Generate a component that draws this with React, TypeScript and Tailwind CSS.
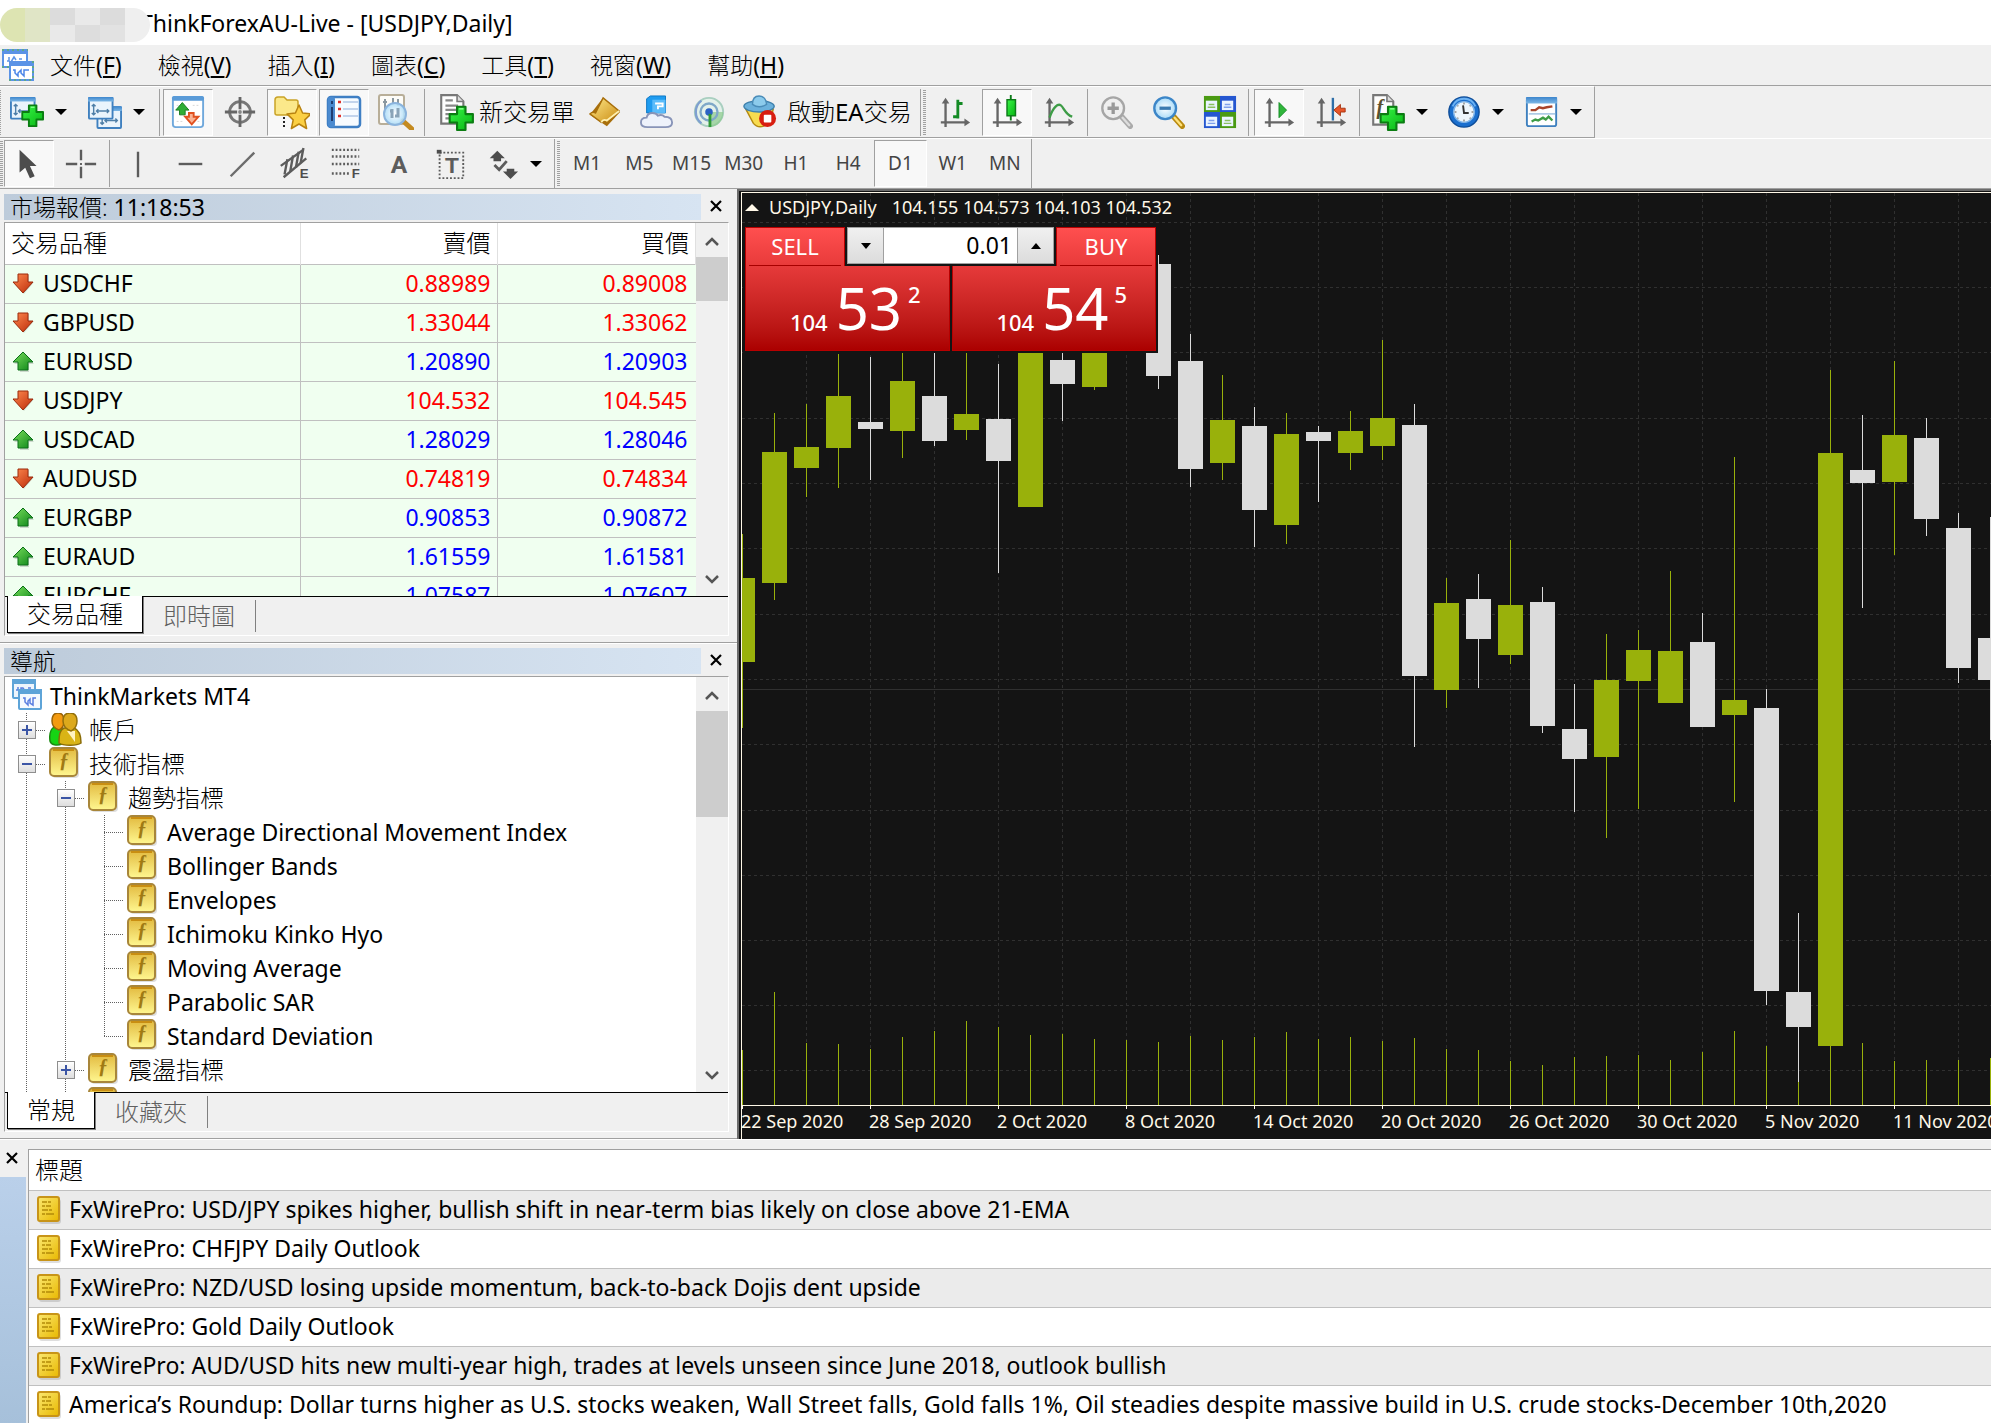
import React from 'react';

/* ---------- data ---------- */

type Quote = { symbol: string; up: boolean; bid: string; ask: string };

const quotes: Quote[] = [
  { symbol: 'USDCHF', up: false, bid: '0.88989', ask: '0.89008' },
  { symbol: 'GBPUSD', up: false, bid: '1.33044', ask: '1.33062' },
  { symbol: 'EURUSD', up: true, bid: '1.20890', ask: '1.20903' },
  { symbol: 'USDJPY', up: false, bid: '104.532', ask: '104.545' },
  { symbol: 'USDCAD', up: true, bid: '1.28029', ask: '1.28046' },
  { symbol: 'AUDUSD', up: false, bid: '0.74819', ask: '0.74834' },
  { symbol: 'EURGBP', up: true, bid: '0.90853', ask: '0.90872' },
  { symbol: 'EURAUD', up: true, bid: '1.61559', ask: '1.61581' },
  { symbol: 'EURCHF', up: true, bid: '1.07587', ask: '1.07607' },
];

const news = [
  'FxWirePro: USD/JPY spikes higher, bullish shift in near-term bias likely on close above 21-EMA',
  'FxWirePro: CHFJPY Daily Outlook',
  'FxWirePro: NZD/USD losing upside momentum, back-to-back Dojis dent upside',
  'FxWirePro: Gold Daily Outlook',
  'FxWirePro: AUD/USD hits new multi-year high, trades at levels unseen since June 2018, outlook bullish',
  'America’s Roundup: Dollar turns higher as U.S. stocks weaken, Wall Street falls, Gold falls 1%, Oil steadies despite massive build in U.S. crude stocks-December 10th,2020',
];

const menus = [
  ['文件', 'F'],
  ['檢視', 'V'],
  ['插入', 'I'],
  ['圖表', 'C'],
  ['工具', 'T'],
  ['視窗', 'W'],
  ['幫助', 'H'],
];

const periods = ['M1', 'M5', 'M15', 'M30', 'H1', 'H4', 'D1', 'W1', 'MN'];

// high, body top, body bottom, low, rising, volume top
type Candle = [number, number, number, number, boolean, number];

const candles: Candle[] = [
  [534, 578, 662, 728, true, 1050],
  [413, 452, 583, 600, true, 992],
  [404, 447, 468, 497, true, 1043],
  [354, 396, 448, 488, true, 1044],
  [357, 422, 429, 480, false, 1049],
  [340, 381, 431, 458, true, 1037],
  [340, 396, 441, 446, false, 1031],
  [340, 414, 430, 440, true, 1021],
  [364, 419, 461, 573, false, 1027],
  [330, 340, 507, 507, true, 1035],
  [340, 360, 384, 421, false, 1034],
  [330, 340, 387, 390, true, 1039],
  [300, 310, 330, 340, true, 1040],
  [255, 264, 376, 389, false, 1042],
  [334, 361, 469, 487, false, 1036],
  [375, 420, 463, 480, true, 1040],
  [407, 426, 510, 547, false, 1037],
  [413, 434, 525, 544, true, 1032],
  [426, 432, 441, 502, false, 1039],
  [411, 431, 453, 470, true, 1037],
  [340, 418, 446, 460, true, 1041],
  [404, 425, 676, 747, false, 1038],
  [578, 603, 690, 708, true, 1049],
  [574, 599, 639, 688, false, 1050],
  [540, 605, 655, 664, true, 1061],
  [587, 602, 726, 733, false, 1065],
  [684, 729, 759, 812, false, 1057],
  [634, 680, 757, 838, true, 1056],
  [630, 650, 681, 809, true, 1055],
  [571, 651, 703, 703, true, 1060],
  [613, 642, 727, 727, false, 1052],
  [457, 700, 715, 802, true, 1031],
  [689, 708, 991, 1005, false, 1046],
  [913, 992, 1027, 1082, false, 1070],
  [370, 453, 1046, 1046, true, 1046],
  [415, 470, 483, 608, false, 1043],
  [361, 435, 482, 555, true, 1061],
  [418, 438, 519, 536, false, 1060],
  [513, 528, 668, 683, false, 1060],
  [517, 638, 680, 740, false, 1058],
];

const gridRows = [222, 287, 352, 418, 483, 548, 614, 679, 744, 810, 875, 940, 1005, 1070];
const dates = [
  '22 Sep 2020',
  '28 Sep 2020',
  '2 Oct 2020',
  '8 Oct 2020',
  '14 Oct 2020',
  '20 Oct 2020',
  '26 Oct 2020',
  '30 Oct 2020',
  '5 Nov 2020',
  '11 Nov 2020',
];

type Guide = 'line' | 'tee' | 'end' | 'plus' | 'minus';
type Node = { guides: Guide[]; icon: 'root' | 'people' | 'fx'; label: string };

const tree: Node[] = [
  { guides: [], icon: 'root', label: 'ThinkMarkets MT4' },
  { guides: ['plus'], icon: 'people', label: '帳戶' },
  { guides: ['minus'], icon: 'fx', label: '技術指標' },
  { guides: ['line', 'minus'], icon: 'fx', label: '趨勢指標' },
  { guides: ['line', 'line', 'tee'], icon: 'fx', label: 'Average Directional Movement Index' },
  { guides: ['line', 'line', 'tee'], icon: 'fx', label: 'Bollinger Bands' },
  { guides: ['line', 'line', 'tee'], icon: 'fx', label: 'Envelopes' },
  { guides: ['line', 'line', 'tee'], icon: 'fx', label: 'Ichimoku Kinko Hyo' },
  { guides: ['line', 'line', 'tee'], icon: 'fx', label: 'Moving Average' },
  { guides: ['line', 'line', 'tee'], icon: 'fx', label: 'Parabolic SAR' },
  { guides: ['line', 'line', 'end'], icon: 'fx', label: 'Standard Deviation' },
  { guides: ['line', 'plus'], icon: 'fx', label: '震盪指標' },
  { guides: ['line', 'tee'], icon: 'fx', label: '' },
];

/* ---------- icons ---------- */

function Svg({ children, size = 'size-[34px]' }: { children: React.ReactNode; size?: string }) {
  return (
    <svg viewBox="0 0 36 36" className={`${size} shrink-0`} fill="none" aria-hidden="true">
      {children}
    </svg>
  );
}

const PLUS = 'M-4 -11H4V-4H11V4H4V11H-4V4H-11V-4H-4Z';

function Plus({ x, y }: { x: number; y: number }) {
  return (
    <g transform={`translate(${x} ${y})`}>
      <path d={PLUS} fill="url(#gPlus)" stroke="#0b7d12" strokeWidth="2" strokeLinejoin="round" />
      <path d="M-2 -9H2" stroke="#7dff85" strokeWidth="1.5" />
    </g>
  );
}

function Defs() {
  return (
    <svg className="absolute size-0" aria-hidden="true">
      <defs>
        <linearGradient id="gPlus" x1="0" y1="0" x2="1" y2="1">
          <stop offset="0" stopColor="#39f548" />
          <stop offset="1" stopColor="#07b512" />
        </linearGradient>
        <linearGradient id="gFx" x1="0" y1="0" x2="0" y2="1">
          <stop offset="0" stopColor="#e2b93e" />
          <stop offset="0.5" stopColor="#f0d868" />
          <stop offset="1" stopColor="#fff790" />
        </linearGradient>
        <linearGradient id="gNews" x1="0" y1="0" x2="1" y2="1">
          <stop offset="0" stopColor="#fbe870" />
          <stop offset="1" stopColor="#e8b800" />
        </linearGradient>
        <linearGradient id="gGreen" x1="0" y1="0" x2="1" y2="1">
          <stop offset="0" stopColor="#7be05d" />
          <stop offset="1" stopColor="#0b8418" />
        </linearGradient>
        <linearGradient id="gRed" x1="0" y1="0" x2="1" y2="1">
          <stop offset="0" stopColor="#ff8a50" />
          <stop offset="1" stopColor="#bb2a08" />
        </linearGradient>
        <linearGradient id="gBlue" x1="0" y1="0" x2="0" y2="1">
          <stop offset="0" stopColor="#3b84cc" />
          <stop offset="1" stopColor="#7db8e6" />
        </linearGradient>
        <linearGradient id="gGold" x1="0" y1="0" x2="1" y2="1">
          <stop offset="0" stopColor="#ffe98a" />
          <stop offset="1" stopColor="#c98a10" />
        </linearGradient>
        <radialGradient id="gLens">
          <stop offset="0" stopColor="#ffffff" />
          <stop offset="1" stopColor="#a9dbf8" />
        </radialGradient>
      </defs>
    </svg>
  );
}

function AppLogo() {
  return (
    <svg viewBox="0 0 32 32" className="size-8 shrink-0" aria-hidden="true">
      <rect x="1" y="2" width="24" height="16" fill="#fff" stroke="#5b93e6" strokeWidth="2" />
      <rect x="0" y="0" width="26" height="5" fill="#5b93e6" />
      <path d="M5 12h2V8M9 13l3-5 2 3M17 10h3" stroke="#5b93e6" strokeWidth="1.5" fill="none" />
      <rect x="8" y="13" width="23" height="18" fill="#fff" stroke="#5b93e6" strokeWidth="2" />
      <rect x="7" y="12" width="25" height="5" fill="#5b93e6" />
      <path d="M11 21h2v3l3 3v-3l3-3v3l3 3v-6h5" stroke="#4c86e8" strokeWidth="1.5" fill="none" />
      <path d="M0 1h26M0 18h7M7 31h25M31 12v19" stroke="#5fb06c" strokeWidth="1.5" strokeDasharray="2 3" />
    </svg>
  );
}

function RootIcon() {
  return (
    <svg viewBox="0 0 30 32" className="h-8 w-[30px] shrink-0" fill="none" aria-hidden="true">
      <rect x="1" y="1" width="22" height="18" rx="1" fill="#eef5fc" stroke="#5ea4d8" strokeWidth="2" />
      <rect x="0" y="0" width="24" height="5" fill="#5ea4d8" />
      <path d="M4 11h2V8M9 13V9h2l2 3M16 9h3" stroke="#5b7fe0" strokeWidth="1.5" />
      <rect x="7" y="11" width="22" height="19" rx="1" fill="#f6fafe" stroke="#5ea4d8" strokeWidth="2" />
      <rect x="6" y="10" width="24" height="5" fill="#5ea4d8" />
      <path d="M11 19h2v4l3 3v-4l2-2v4l3 2v-7h3" stroke="#5b7fe0" strokeWidth="1.5" />
    </svg>
  );
}

function FxIcon() {
  return (
    <svg viewBox="0 0 30 31" className="h-[31px] w-[30px] shrink-0" aria-hidden="true">
      <rect x="3" y="3" width="27" height="28" rx="4" fill="#000" opacity="0.13" />
      <rect x="1" y="1" width="27" height="28" rx="4" fill="url(#gFx)" stroke="#a8863a" strokeWidth="2" />
      <path d="M4 3h21" stroke="#c98e12" strokeWidth="2" />
      <text x="10" y="20" fontFamily="Liberation Serif, serif" fontStyle="italic" fontWeight="700" fontSize="20" fill="#a07a14">
        ƒ
      </text>
    </svg>
  );
}

function PeopleIcon() {
  return (
    <svg viewBox="0 0 34 34" className="h-[34px] w-[34px] shrink-0" aria-hidden="true">
      <path d="M1 28c-1-8 1-12 4-14h8v17c-5 2-11 1-12-3z" fill="#16d414" stroke="#1a8a10" strokeWidth="1.5" />
      <path d="M3 8q0-8 6-8t6 8q0 7-5 9-7-2-7-9z" fill="#f39a10" stroke="#9a6408" strokeWidth="1.5" />
      <path d="M10 30c0-9 1-13 5-15h10c5 2 7 7 7 15-4 3-18 3-22 0z" fill="#d9b416" stroke="#8a6c08" strokeWidth="1.5" />
      <path d="M18 18l8 11V18z" fill="#fff3c0" />
      <path d="M14 8q0-8 7-8t7 8q0 7-6 10-8-3-8-10z" fill="#dca91c" stroke="#93700c" strokeWidth="1.5" />
    </svg>
  );
}

function TrendIcon({ up }: { up: boolean }) {
  return (
    <svg viewBox="0 0 22 22" className="size-[22px] shrink-0" aria-hidden="true">
      {up ? (
        <g>
          <path d="M12 2l10 11h-5v8h-9v-8H2z" fill="#000" opacity="0.15" />
          <path d="M11 1l10 10h-5v8H6v-8H1z" fill="url(#gGreen)" stroke="#0a6e18" strokeWidth="1" strokeLinejoin="round" />
        </g>
      ) : (
        <g>
          <path d="M8 2h9v7h5l-10 12L2 10h6z" fill="#000" opacity="0.15" />
          <path d="M6 1h10v8h5L11 20 1 9h5z" fill="url(#gRed)" stroke="#9c2a0c" strokeWidth="1" strokeLinejoin="round" />
        </g>
      )}
    </svg>
  );
}

function NewsIcon() {
  return (
    <svg viewBox="0 0 24 28" className="h-7 w-6 shrink-0" aria-hidden="true">
      <rect x="2" y="3" width="22" height="25" rx="3" fill="#000" opacity="0.13" />
      <rect x="1" y="1" width="21" height="24" rx="2" fill="url(#gNews)" stroke="#c89418" strokeWidth="2" />
      <path d="M5 6h5M11 6h3M5 10h3M9 10h5M5 14h6M12 14h3M5 18h3M9 18h8" stroke="#b38a08" strokeWidth="1.6" />
    </svg>
  );
}

function ChartWindow({ x, y }: { x: number; y: number }) {
  return (
    <g transform={`translate(${x} ${y})`}>
      <rect x="1" y="1" width="25" height="22" rx="1" fill="#eaf4fc" stroke="#3f80bf" strokeWidth="2" />
      <rect x="0" y="0" width="27" height="5" rx="1" fill="url(#gBlue)" />
      <path d="M6 8v11M4 10l2-2 2 2M4 17l2 2 2-2M9 15h13M20 13l2 2-2 2M11 13l-2 2 2 2" stroke="#4f7fa8" strokeWidth="1.5" />
    </g>
  );
}

const NewChartIcon = () => (
  <Svg>
    <ChartWindow x={0} y={2} />
    <Plus x={24} y={22} />
  </Svg>
);

const ProfilesIcon = () => (
  <Svg>
    <ChartWindow x={9} y={12} />
    <ChartWindow x={0} y={2} />
  </Svg>
);

const MarketIcon = () => (
  <Svg>
    <rect x="2" y="2" width="32" height="32" rx="3" fill="#fff" stroke="#6fa8dc" strokeWidth="2" />
    <rect x="1" y="1" width="34" height="5" rx="2" fill="#5a9bd8" />
    <path d="M6 11h6M23 11h8M6 28h8M28 28h3" stroke="#d5d5d5" strokeWidth="1" strokeDasharray="2 2" />
    <path d="M12 8l7 8h-4v5H9v-5H5z" fill="#2fae35" stroke="#1a7c20" />
    <path d="M19 19h5v4h5l-7 8-7-8h4z" fill="#f9b294" stroke="#e0501f" strokeWidth="2" />
  </Svg>
);

const TargetIcon = () => (
  <Svg>
    <circle cx="18" cy="18" r="11" stroke="#777" strokeWidth="3" />
    <path d="M18 2v13M18 21v13M2 18h13M21 18h13" stroke="#666" strokeWidth="3" />
    <circle cx="18" cy="18" r="2" fill="#888" />
  </Svg>
);

const NavigatorIcon = () => (
  <Svg size="size-9">
    <path d="M1 6q0-3 3-3h6l3 3h9q2 0 2 2v11q0 2-2 2H3q-2 0-2-2z" fill="#fbe88a" stroke="#c9a227" strokeWidth="1.5" />
    <path d="M10 23v12" stroke="#222" strokeWidth="2" strokeDasharray="2 2" />
    <path
      d="M25 11l3.600 8 8.400.900-6.200 6 1.800 8.600L25 30l-7.600 4.500 1.800-8.600-6.200-6 8.400-.900z"
      fill="#fbd044"
      stroke="#b98310"
      strokeWidth="1.5"
      strokeLinejoin="round"
    />
  </Svg>
);

const TerminalIcon = () => (
  <Svg size="size-9">
    <rect x="2" y="3" width="32" height="30" rx="3" fill="#f7fbff" stroke="#3f7fc4" strokeWidth="2.500" />
    <rect x="2" y="3" width="7" height="30" rx="2" fill="#4b8bd0" />
    <path d="M6 7v3M6 13v14" stroke="#1f3d70" strokeWidth="2" />
    <path d="M17 8h15M17 15h15M17 22h15" stroke="#b3c7e6" strokeWidth="1.500" />
    <path d="M12 8h3M12 15h3M12 22h3" stroke="#e0322a" strokeWidth="2.500" />
  </Svg>
);

const TesterIcon = () => (
  <Svg size="size-9">
    <rect x="1" y="1" width="25" height="29" rx="2" fill="#fdfcf8" stroke="#b8ae98" strokeWidth="2" />
    <path d="M7 5v10M5 8h4M20 5v7M15 4v6" stroke="#8b98a0" strokeWidth="2" />
    <path d="M25 27l9 8" stroke="#c48a20" strokeWidth="5" strokeLinecap="round" />
    <circle cx="17" cy="20" r="11" fill="url(#gLens)" fillOpacity="0.900" stroke="#8bb4dd" strokeWidth="2" />
    <path d="M14 15v9M12 17h3M20 14v8h-3" stroke="#8aa4b8" strokeWidth="3" />
  </Svg>
);

const NewOrderIcon = () => (
  <Svg size="size-[38px]">
    <path d="M4 2h15l6 6v21H4z" fill="#fdfdfd" stroke="#777" strokeWidth="2" />
    <path d="M19 2v6h6" fill="#ddd" stroke="#777" strokeWidth="1.500" />
    <path d="M8 7h7M8 12h12M8 16h14M8 20h12M8 24h7" stroke="#888" strokeWidth="2" />
    <Plus x={23} y={24} />
  </Svg>
);

const BookIcon = () => (
  <Svg>
    <path d="M2 21L16 3l18 15-14 15z" fill="#a86f0c" />
    <path d="M2 20Q5 17 8 19L16 3l17 14-13 13Q17 26 14 29z" fill="url(#gGold)" stroke="#a86f0c" strokeWidth="1.500" />
    <path d="M14 29q2-4 6-2l13-10" stroke="#fff0b0" strokeWidth="2" />
  </Svg>
);

const CloudServerIcon = () => (
  <Svg>
    <path d="M7 4l4-3h16v18H7z" fill="#1f9cf0" stroke="#0c76c4" />
    <path d="M13 5h14v14H13z" fill="#5bbcfa" />
    <path d="M16 9h8v3h-5v3" stroke="#fff" strokeWidth="2" />
    <path
      d="M8 34q-7 0-7-5 0-5 6-5 1-5 6-5 4 0 6 3 4-2 7 1 8 0 8 6 0 5-7 5z"
      fill="#eef2fb"
      stroke="#8894b8"
      strokeWidth="2"
    />
  </Svg>
);

const SignalIcon = () => (
  <Svg>
    <circle cx="18" cy="18" r="15" fill="#e4f1ea" stroke="#a9cfc0" strokeWidth="2" />
    <path d="M18 18h15a15 15 0 0 1-15 16z" fill="#8cca8c" opacity="0.700" />
    <path d="M10 30a15 15 0 0 1 0-24" stroke="#7f9fd0" strokeWidth="2.500" />
    <circle cx="18" cy="18" r="9" stroke="#7fa8c8" strokeWidth="2.500" />
    <circle cx="18" cy="18" r="4" fill="#2b62c4" />
    <path d="M19 20v14" stroke="#2f9a38" strokeWidth="3" />
  </Svg>
);

const ExpertIcon = () => (
  <Svg>
    <path d="M3 15h29l-2 8-8 10q-7 2-11-3z" fill="#f8dc50" stroke="#b58a10" strokeWidth="1.500" />
    <ellipse cx="17" cy="12" rx="16" ry="6" fill="#6bb1dc" stroke="#3f80ac" strokeWidth="1.500" />
    <path d="M10 10q0-9 7-9t8 9q-8 5-15 0z" fill="#8ccbec" stroke="#4a8cb8" strokeWidth="1.500" />
    <circle cx="26" cy="25" r="9" fill="#d81e10" />
    <rect x="22" y="21" width="8" height="8" rx="1" fill="#fff" />
  </Svg>
);

const Axes = () => (
  <g>
    <path d="M8 7v27M3 29h27" stroke="#666" strokeWidth="2.500" />
    <path d="M8 3l4 6H4zM34 29l-6 4v-8z" fill="#666" />
  </g>
);

const BarsIcon = () => (
  <Svg>
    <Axes />
    <path d="M21 5v20M21 9h5M16 23h5" stroke="#138a24" strokeWidth="3" />
  </Svg>
);

const CandlesIcon = () => (
  <Svg>
    <Axes />
    <path d="M22 0v27" stroke="#0c7a18" strokeWidth="2" />
    <rect x="18" y="5" width="9" height="17" fill="url(#gPlus)" stroke="#0c7a18" strokeWidth="1.500" />
  </Svg>
);

const LineIcon = () => (
  <Svg>
    <Axes />
    <path d="M8 24C12 12 17 9 20 11s5 10 12 12" stroke="#3d9c46" strokeWidth="2.500" />
  </Svg>
);

const ZoomInIcon = () => (
  <Svg>
    <path d="M24 23l9 10" stroke="#aaa" strokeWidth="6" strokeLinecap="round" />
    <path d="M25 24l7 8" stroke="#ddd" strokeWidth="2.500" strokeLinecap="round" />
    <circle cx="15" cy="14" r="11.500" fill="#efefef" stroke="#a6a6a6" strokeWidth="2.500" />
    <path d="M15 8v12M9 14h12" stroke="#999" strokeWidth="3.500" />
  </Svg>
);

const ZoomOutIcon = () => (
  <Svg>
    <path d="M24 23l9 10" stroke="#b98a10" strokeWidth="6" strokeLinecap="round" />
    <path d="M25 24l7 8" stroke="#ffe27a" strokeWidth="2.500" strokeLinecap="round" />
    <circle cx="15" cy="14" r="11.500" fill="url(#gLens)" stroke="#3c86c8" strokeWidth="2.500" />
    <path d="M9 14h12" stroke="#3a7ab0" strokeWidth="3.500" />
  </Svg>
);

const Tile = ({ x, y, green }: { x: number; y: number; green: boolean }) => (
  <g transform={`translate(${x} ${y})`}>
    <rect width="17" height="17" fill={green ? '#4a9a12' : '#2456d0'} />
    <rect x="2" y="5" width="12" height="10" fill="#eaf4ff" />
    <path d="M5 9h6M4 12h8" stroke={green ? '#8cc060' : '#7fa0ec'} strokeWidth="1.500" />
  </g>
);

const TileIcon = () => (
  <Svg>
    <Tile x={1} y={1} green />
    <Tile x={18} y={1} green={false} />
    <Tile x={1} y={18} green={false} />
    <Tile x={18} y={18} green />
  </Svg>
);

const AutoScrollIcon = () => (
  <Svg>
    <Axes />
    <path d="M18 8l8 8-8 8z" fill="#2fb53a" stroke="#138a24" />
  </Svg>
);

const ShiftIcon = () => (
  <Svg>
    <Axes />
    <path d="M20 3v24" stroke="#2f6fa8" strokeWidth="2.500" />
    <path d="M21 16l7-6v4h5v4h-5v4z" fill="#e8562a" stroke="#a83410" />
  </Svg>
);

const IndicatorsIcon = () => (
  <Svg size="size-[38px]">
    <path d="M4 2h13l6 6v22H4z" fill="#fdfdfd" stroke="#777" strokeWidth="2" />
    <path d="M17 2v6h6" fill="#ddd" stroke="#777" strokeWidth="1.500" />
    <text x="7" y="20" fontFamily="Liberation Serif, serif" fontStyle="italic" fontWeight="700" fontSize="19" fill="#5c5030">
      f
    </text>
    <Plus x={22} y={24} />
  </Svg>
);

const ClockIcon = () => (
  <Svg>
    <circle cx="18" cy="18" r="16" fill="#1b6fce" stroke="#0e4d99" strokeWidth="1.500" />
    <path d="M6 12a13 13 0 0 1 24 0" stroke="#6db2f2" strokeWidth="2" />
    <circle cx="18" cy="18" r="11" fill="#eef6fc" stroke="#7fb4e8" strokeWidth="1.500" />
    <path d="M17 11l1 8h5" stroke="#333" strokeWidth="2" />
    <path d="M18 8v2M18 26v2M8 18h2M26 18h2M11 11l1 1M25 11l-1 1M11 25l1-1M25 25l-1-1" stroke="#888" strokeWidth="1.500" />
  </Svg>
);

const TemplateIcon = () => (
  <Svg>
    <rect x="2" y="3" width="31" height="30" rx="2" fill="#fff" stroke="#3f80bf" strokeWidth="2" />
    <rect x="1" y="2" width="33" height="7" rx="1" fill="url(#gBlue)" />
    <path d="M6 16h5l4-3 4 1 4-1 6-1" stroke="#a8442a" strokeWidth="2.500" />
    <path d="M4 20h28" stroke="#9cc0e0" strokeWidth="1.500" />
    <path d="M7 28l4-2 3 1 5-3 3 2 3-3 4 4" stroke="#3d9c46" strokeWidth="2.500" />
  </Svg>
);

const CursorIcon = () => (
  <Svg>
    <path d="M8 3v24l6-5 5 11 5-2-5-11h7z" fill="#4d4d4d" />
  </Svg>
);

const CrossIcon = () => (
  <Svg>
    <path d="M18 3v11M18 21v12M2 18h12M22 18h12" stroke="#5c5c5c" strokeWidth="2.500" />
    <path d="M17 18h2" stroke="#5c5c5c" strokeWidth="2" />
  </Svg>
);

const VLineIcon = () => (
  <Svg>
    <path d="M18 5v27" stroke="#5c5c5c" strokeWidth="2.500" />
  </Svg>
);

const HLineIcon = () => (
  <Svg>
    <path d="M6 18h25" stroke="#5c5c5c" strokeWidth="2.500" />
  </Svg>
);

const TrendLineIcon = () => (
  <Svg>
    <path d="M6 31L31 6" stroke="#6c6c6c" strokeWidth="2.500" />
  </Svg>
);

const ChannelIcon = () => (
  <Svg>
    <path d="M4 20L28 3M7 32L31 12" stroke="#5c5c5c" strokeWidth="2.500" />
    <path d="M11 13L8 29M17 9l-3 17M23 5l-3 17M28 1l-3 16" stroke="#5c5c5c" strokeWidth="2.500" />
    <text x="24" y="33" fontFamily="Liberation Sans, sans-serif" fontWeight="700" fontSize="14" fill="#4d4d4d">
      E
    </text>
  </Svg>
);

const FiboIcon = () => (
  <Svg>
    <path d="M3 3h29M3 10h29M3 18h29M3 28h19" stroke="#5c5c5c" strokeWidth="2.500" strokeDasharray="2 2" />
    <text x="24" y="33" fontFamily="Liberation Sans, sans-serif" fontWeight="700" fontSize="14" fill="#4d4d4d">
      F
    </text>
  </Svg>
);

const TextIcon = () => (
  <Svg>
    <text x="19" y="28" textAnchor="middle" fontFamily="Roboto, sans-serif" fontWeight="700" fontSize="26" fill="#5c5c5c">
      A
    </text>
  </Svg>
);

const LabelIcon = () => (
  <Svg>
    <rect x="7" y="6" width="25" height="27" stroke="#5c5c5c" strokeWidth="2" strokeDasharray="2 2" />
    <rect x="4" y="3" width="5" height="4" fill="#4d4d4d" />
    <text x="20" y="28" textAnchor="middle" fontFamily="Liberation Sans, sans-serif" fontWeight="700" fontSize="24" fill="#5c5c5c">
      T
    </text>
  </Svg>
);

const ArrowsIcon = () => (
  <Svg>
    <path d="M13 4l8 8h-4v3H9v-3H5zM27 34l-8-8h4v-3h8v3h4z" fill="#4d4d4d" />
    <path d="M10 19l5 5 8-9" stroke="#5c5c5c" strokeWidth="3" />
  </Svg>
);

/* ---------- toolbar parts ---------- */

function ToolButton({ label, pressed, children }: { label: string; pressed?: boolean; children: React.ReactNode }) {
  return (
    <button type="button" aria-label={label} aria-pressed={pressed} className="flex h-[49px] w-[52px] shrink-0 items-center justify-center p-px">
      <span
        className={
          pressed
            ? 'flex size-full items-center justify-center border border-t-[#a0a0a0] border-r-white border-b-white border-l-[#a0a0a0] bg-[#f8f8f8]'
            : 'flex size-full items-center justify-center'
        }
      >
        {children}
      </span>
    </button>
  );
}

function DropButton({ label }: { label: string }) {
  return (
    <button type="button" aria-label={label} className="flex h-[49px] w-4 shrink-0 items-center justify-center">
      <svg viewBox="0 0 12 6" className="h-1.5 w-3" aria-hidden="true">
        <path d="M0 0h12L6 6z" fill="#000" />
      </svg>
    </button>
  );
}

const Separator = () => <span className="mx-0.5 h-[47px] w-px shrink-0 bg-[#a0a0a0]" />;

const Grip = () => (
  <span className="h-[45px] w-[3px] shrink-0 bg-[repeating-linear-gradient(to_bottom,#a0a0a0_0,#a0a0a0_1px,#f0f0f0_1px,#f0f0f0_2px)]" />
);

function MainToolbar() {
  return (
    <div className="flex">
      <div role="toolbar" aria-label="標準" className="flex h-[52px] items-center border-t border-r border-b border-t-white border-r-[#a0a0a0] border-b-[#a0a0a0]">
        <span className="-ml-0.5 flex"><Grip /></span>
        <ToolButton label="新圖表"><NewChartIcon /></ToolButton>
        <DropButton label="新圖表選單" />
        <span className="w-2.5" />
        <ToolButton label="設定檔"><ProfilesIcon /></ToolButton>
        <DropButton label="設定檔選單" />
        <span className="w-2.5" />
        <Separator />
        <ToolButton label="市場報價" pressed><MarketIcon /></ToolButton>
        <ToolButton label="數據窗口"><TargetIcon /></ToolButton>
        <ToolButton label="導航" pressed><NavigatorIcon /></ToolButton>
        <ToolButton label="終端" pressed><TerminalIcon /></ToolButton>
        <ToolButton label="策略測試"><TesterIcon /></ToolButton>
        <Separator />
        <button type="button" className="flex h-[49px] items-center gap-1 pr-1 pl-2.5 text-[24px] font-light whitespace-nowrap">
          <NewOrderIcon />
          新交易單
        </button>
        <ToolButton label="MetaEditor"><BookIcon /></ToolButton>
        <ToolButton label="虛擬主機"><CloudServerIcon /></ToolButton>
        <ToolButton label="信號"><SignalIcon /></ToolButton>
        <button type="button" className="flex h-[49px] items-center gap-2.5 pr-1.5 pl-2 text-[24px] font-light whitespace-nowrap">
          <ExpertIcon />
          <span>
            啟動<span className="font-normal">EA</span>交易
          </span>
        </button>
        <Separator />
        <Grip />
        <span className="w-[3px]" />
        <ToolButton label="柱狀圖"><BarsIcon /></ToolButton>
        <ToolButton label="陰陽燭" pressed><CandlesIcon /></ToolButton>
        <ToolButton label="折線圖"><LineIcon /></ToolButton>
        <Separator />
        <ToolButton label="放大"><ZoomInIcon /></ToolButton>
        <ToolButton label="縮小"><ZoomOutIcon /></ToolButton>
        <ToolButton label="平鋪視窗"><TileIcon /></ToolButton>
        <Separator />
        <span className="w-0.5" />
        <ToolButton label="自動滾動" pressed><AutoScrollIcon /></ToolButton>
        <ToolButton label="圖表平移"><ShiftIcon /></ToolButton>
        <Separator />
        <ToolButton label="指標"><IndicatorsIcon /></ToolButton>
        <DropButton label="指標選單" />
        <span className="w-2" />
        <ToolButton label="週期"><ClockIcon /></ToolButton>
        <DropButton label="週期選單" />
        <span className="w-2.5" />
        <ToolButton label="模板"><TemplateIcon /></ToolButton>
        <DropButton label="模板選單" />
        <span className="w-2.5" />
      </div>
    </div>
  );
}

function LineToolbar() {
  return (
    <div className="flex border-t border-t-white">
      <div role="toolbar" aria-label="畫線" className="flex h-[49px] items-center border-r border-[#a0a0a0]">
        <Grip />
        <ToolButton label="游標" pressed><CursorIcon /></ToolButton>
        <ToolButton label="十字"><CrossIcon /></ToolButton>
        <Separator />
        <ToolButton label="垂直線"><VLineIcon /></ToolButton>
        <ToolButton label="水平線"><HLineIcon /></ToolButton>
        <ToolButton label="趨勢線"><TrendLineIcon /></ToolButton>
        <ToolButton label="等距通道"><ChannelIcon /></ToolButton>
        <ToolButton label="斐波那契"><FiboIcon /></ToolButton>
        <ToolButton label="文字"><TextIcon /></ToolButton>
        <ToolButton label="文字標籤"><LabelIcon /></ToolButton>
        <ToolButton label="箭頭"><ArrowsIcon /></ToolButton>
        <DropButton label="箭頭選單" />
        <span className="w-2.5" />
      </div>
      <div role="toolbar" aria-label="時間週期" className="flex h-[49px] items-center gap-px border-r border-[#a0a0a0] pl-0.5">
        <Grip />
        <div className="grid w-[470px] grid-cols-9">
          {periods.map((p) => (
            <button
              key={p}
              type="button"
              aria-pressed={p === 'D1'}
              className={
                p === 'D1'
                  ? 'h-[47px] border border-t-[#a0a0a0] border-r-white border-b-white border-l-[#a0a0a0] bg-[#f8f8f8] text-[19px] text-[#444]'
                  : 'h-[47px] text-[19px] text-[#444]'
              }
            >
              {p}
            </button>
          ))}
        </div>
      </div>
    </div>
  );
}

/* ---------- docked panels ---------- */

function CloseButton({ label }: { label: string }) {
  return (
    <button type="button" aria-label={label} className="flex h-6 w-full items-center justify-center">
      <svg viewBox="0 0 12 12" className="size-3" aria-hidden="true">
        <path d="M1 1l10 10M11 1L1 11" stroke="#000" strokeWidth="2.200" />
      </svg>
    </button>
  );
}

function PanelTitle({ children, close }: { children: React.ReactNode; close: string }) {
  return (
    <header className="flex pr-1.5">
      <h2 className="h-[26px] flex-1 bg-linear-to-r from-[#bdcbda] to-[#d7e4f2] px-1.5 text-[23px] leading-[26px] font-light">{children}</h2>
      <div className="w-[30px]">
        <CloseButton label={close} />
      </div>
    </header>
  );
}

function Scrollbar({ thumb }: { thumb: string }) {
  return (
    <div className="flex w-8 shrink-0 flex-col items-center bg-[#f0f0f0]">
      <button type="button" aria-label="向上捲動" className="flex h-[34px] w-full items-center justify-center pt-0.5">
        <svg viewBox="0 0 14 9" className="h-[9px] w-3.5" fill="none" aria-hidden="true">
          <path d="M1 8l6-6 6 6" stroke="#555" strokeWidth="2.500" />
        </svg>
      </button>
      <div className={`w-full bg-[#cdcdcd] ${thumb}`} />
      <button type="button" aria-label="向下捲動" className="mt-auto flex h-[34px] w-full items-center justify-center">
        <svg viewBox="0 0 14 9" className="h-[9px] w-3.5" fill="none" aria-hidden="true">
          <path d="M1 1l6 6 6-6" stroke="#555" strokeWidth="2.500" />
        </svg>
      </button>
    </div>
  );
}

function PanelTabs({ active, other }: { active: string; other: string }) {
  return (
    <div role="tablist" className="flex h-[39px] items-start border-t border-black pl-0.5 text-[24px] font-light">
      <button type="button" role="tab" aria-selected="true" className="-mt-px h-[37px] border-x border-b border-black bg-white px-[19px] leading-[36px] shadow-[1px_1px_0_#808080]">
        {active}
      </button>
      <button type="button" role="tab" aria-selected="false" className="mt-[3px] h-8 border-r border-[#808080] px-5 leading-7 text-[#606060]">
        {other}
      </button>
    </div>
  );
}

function MarketWatch() {
  return (
    <section aria-label="市場報價" className="border-b border-[#a0a0a0] pt-[5px] pb-1.5 pl-1">
      <PanelTitle close="關閉市場報價">市場報價: <span className="font-normal">11:18:53</span></PanelTitle>
      <div className="mt-0.5 mr-2 border-t border-r border-b border-l border-t-[#a0a0a0] border-r-white border-b-white border-l-[#a0a0a0]">
        <div className="flex h-[373px] overflow-hidden bg-white">
          <div className="min-w-0 flex-1">
            <table className="w-full table-fixed border-collapse text-[23px] leading-none">
              <colgroup>
                <col className="w-[295px]" />
                <col className="w-[197px]" />
                <col />
              </colgroup>
              <thead>
                <tr className="h-[41px] border-b border-[#c0c0c0]">
                  <th className="border-r border-[#e0e0e0] pl-1.5 text-left text-[24px] font-light">交易品種</th>
                  <th className="border-r border-[#e0e0e0] pr-1.5 text-right text-[24px] font-light">賣價</th>
                  <th className="border-r border-[#e0e0e0] pr-1.5 text-right text-[24px] font-light">買價</th>
                </tr>
              </thead>
              <tbody>
                {quotes.map((q) => (
                  <tr key={q.symbol} className="h-[39px] border-b border-[#c0c0c0] bg-[#f0fff0]">
                    <td className="border-r border-[#c0c0c0] pl-[7px]">
                      <span className="flex items-center gap-[9px]">
                        <TrendIcon up={q.up} />
                        {q.symbol}
                      </span>
                    </td>
                    <td className={q.up ? 'border-r border-[#c0c0c0] pr-1.5 text-right text-[#0000ff]' : 'border-r border-[#c0c0c0] pr-1.5 text-right text-[#ff0000]'}>
                      {q.bid}
                    </td>
                    <td className={q.up ? 'pr-2 text-right text-[#0000ff]' : 'pr-2 text-right text-[#ff0000]'}>{q.ask}</td>
                  </tr>
                ))}
              </tbody>
            </table>
          </div>
          <Scrollbar thumb="h-11" />
        </div>
        <PanelTabs active="交易品種" other="即時圖" />
      </div>
    </section>
  );
}

function GuideCell({ kind }: { kind: Guide }) {
  const branch = kind !== 'line';
  const box = kind === 'plus' || kind === 'minus';
  return (
    <span className="relative flex h-[34px] w-[39px] shrink-0 items-center justify-center">
      <svg viewBox="0 0 39 34" className="absolute inset-0 h-[34px] w-[39px]" shapeRendering="crispEdges" aria-hidden="true">
        <path d={kind === 'end' ? 'M19.5 0V17' : 'M19.5 0V34'} stroke="#606060" strokeDasharray="1 1" />
        {branch && <path d="M19 17.500H39" stroke="#606060" strokeDasharray="1 1" />}
      </svg>
      {box && (
        <button
          type="button"
          aria-label={kind === 'plus' ? '展開' : '收合'}
          className="relative flex size-[18px] items-center justify-center border border-[#8e8e8e] bg-linear-to-b from-white to-[#dedede]"
        >
          <svg viewBox="0 0 12 12" className="size-3" aria-hidden="true">
            <path d={kind === 'plus' ? 'M1 6h10M6 1v10' : 'M1 6h10'} stroke="#3b55a5" strokeWidth="2" />
          </svg>
        </button>
      )}
    </span>
  );
}

const isLatin = (s: string) => /^[\x20-\x7e]+$/.test(s);

function Navigator() {
  return (
    <section aria-label="導航" className="border-t border-b border-t-white border-b-[#a0a0a0] pt-1 pb-1.5 pl-1">
      <PanelTitle close="關閉導航">導航</PanelTitle>
      <div className="mt-0.5 mr-2 border-t border-r border-b border-l border-t-[#a0a0a0] border-r-white border-b-white border-l-[#a0a0a0]">
        <div className="flex h-[415px] overflow-hidden bg-white">
          <ul className="min-w-0 flex-1 pt-0.5 pl-0.5 text-[23px]">
            {tree.map((n, i) => (
              <li key={i} className="flex h-[34px]">
                {n.guides.map((g, j) => (
                  <GuideCell key={j} kind={g} />
                ))}
                <span className={n.icon === 'root' ? 'w-[43px] shrink-0 pl-[5px]' : 'w-[43px] shrink-0 pl-[3px]'}>
                  {n.icon === 'root' ? <RootIcon /> : n.icon === 'people' ? <PeopleIcon /> : <FxIcon />}
                </span>
                <span className={isLatin(n.label) ? 'leading-[34px] whitespace-nowrap' : 'text-[24px] leading-[34px] font-light whitespace-nowrap'}>
                  {n.label}
                </span>
              </li>
            ))}
          </ul>
          <Scrollbar thumb="h-[106px]" />
        </div>
        <PanelTabs active="常規" other="收藏夾" />
      </div>
    </section>
  );
}

/* ---------- chart ---------- */

const STEP = 32;
const PLOT_TOP = 193;
const AXIS_Y = 1105;
const RISE = '#99b10b';
const FALL = '#dcdcdc';

function CandleChart() {
  return (
    <svg className="absolute inset-0 size-full" shapeRendering="crispEdges" role="img" aria-label="USDJPY Daily">
      <g transform={`translate(0 ${-PLOT_TOP})`}>
        {gridRows.map((y) => (
          <line key={y} x1="0" x2="100%" y1={y + 0.5} y2={y + 0.5} stroke="#303030" strokeDasharray="3 3" />
        ))}
        {candles.map((_, i) =>
          i % 2 === 0 && i > 0 ? (
            <line key={i} x1={i * STEP + 0.5} x2={i * STEP + 0.5} y1={PLOT_TOP} y2={AXIS_Y} stroke="#303030" strokeDasharray="3 3" />
          ) : null,
        )}
        <line x1="0" x2="100%" y1="689.5" y2="689.5" stroke="#303030" />
        {candles.map(([high, top, bottom, low, rising, volume], i) => (
          <g key={i}>
            <rect x={i * STEP} y={volume} width="1" height={AXIS_Y - volume} fill={RISE} />
            <rect x={i * STEP} y={high} width="1" height={low - high} fill={rising ? RISE : FALL} />
            <rect x={i * STEP - 12} y={top} width="25" height={bottom - top} fill={rising ? RISE : FALL} />
          </g>
        ))}
        <line x1="0" x2="100%" y1={AXIS_Y + 0.5} y2={AXIS_Y + 0.5} stroke="#fff8e8" />
        {dates.map((d, i) => (
          <g key={d}>
            <rect x={i * 4 * STEP} y={AXIS_Y} width="1" height="4" fill="#fff8e8" />
            <text x={i * 4 * STEP - 1} y="1128" fontSize="18" fill="#fff8e8">
              {d}
            </text>
          </g>
        ))}
      </g>
    </svg>
  );
}

function Price({ big, tick, label }: { big: string; tick: string; label: string }) {
  return (
    <button
      type="button"
      aria-label={label}
      className="flex h-[85px] flex-1 items-start justify-center border border-t-0 border-[#b80000] bg-linear-to-b from-[#e63a3a] to-[#ab0000] pl-4 text-white"
    >
      <span className="pt-[42px] text-[22px] leading-7 font-medium">104</span>
      <span className="ml-2 pt-3 text-[58px] leading-[60px]">{big}</span>
      <span className="ml-1.5 pt-3 text-[22px] leading-8 font-medium">{tick}</span>
    </button>
  );
}

function TradePanel() {
  return (
    <div className="relative mt-1.5 ml-px flex w-[415px] flex-col bg-[#141414] p-0.5">
      <div className="flex h-[39px] items-start justify-between">
        <button type="button" className="h-[39px] w-[100px] border border-b-0 border-[#b80000] bg-linear-to-b from-[#ff4f4f] to-[#e83a3a] px-[3px] text-[22px] text-white">
          <span className="block border-b-2 border-[#a80000] leading-[37px]">SELL</span>
        </button>
        <div className="flex h-[37px] w-[207px] border border-[#a0a0a0] bg-white">
          <button type="button" aria-label="減少手數" className="flex w-9 items-center justify-center border-r border-[#a0a0a0] bg-linear-to-b from-[#f0f0f0] to-[#dcdcdc]">
            <svg viewBox="0 0 10 6" className="h-1.5 w-2.5" aria-hidden="true"><path d="M0 0h10L5 6z" /></svg>
          </button>
          <input aria-label="手數" defaultValue="0.01" className="min-w-0 flex-1 px-[5px] text-right text-[23px] text-black outline-none" />
          <button type="button" aria-label="增加手數" className="flex w-9 items-center justify-center border-l border-[#a0a0a0] bg-linear-to-b from-[#f0f0f0] to-[#dcdcdc]">
            <svg viewBox="0 0 10 6" className="h-1.5 w-2.5" aria-hidden="true"><path d="M0 6h10L5 0z" /></svg>
          </button>
        </div>
        <button type="button" className="h-[39px] w-[100px] border border-b-0 border-[#b80000] bg-linear-to-b from-[#ff4f4f] to-[#e83a3a] px-[3px] text-[22px] text-white">
          <span className="block border-b-2 border-[#a80000] leading-[37px]">BUY</span>
        </button>
      </div>
      <div className="flex gap-0.5">
        <Price label="賣出 104.532" big="53" tick="2" />
        <Price label="買入 104.545" big="54" tick="5" />
      </div>
    </div>
  );
}

function ChartPane() {
  return (
    <section aria-label="圖表" className="flex min-w-0 flex-1 border-t-2 border-l-2 border-[#6b6b6b] bg-[#141414]">
      <div className="mt-px ml-0.5 flex min-w-0 flex-1 border-t border-l border-[#fff8e8]">
        <div className="relative min-w-0 flex-1 overflow-hidden text-[#fff8e8]">
          <CandleChart />
          <div className="relative flex h-7 items-center gap-2.5 pl-[3px] text-[18px] leading-7 whitespace-nowrap">
            <svg viewBox="0 0 14 7" className="h-[7px] w-3.5" aria-hidden="true"><path d="M7 0l7 7H0z" fill="#fff8e8" /></svg>
            <span>USDJPY,Daily</span>
            <span className="pl-[5px]">104.155 104.573 104.103 104.532</span>
          </div>
          <div className="-mt-0.5">
            <TradePanel />
          </div>
        </div>
      </div>
    </section>
  );
}

/* ---------- news ---------- */

function NewsPanel() {
  return (
    <section aria-label="新聞" className="flex border-t border-white">
      <div className="flex w-[26px] shrink-0 flex-col">
        <div className="h-[37px] pt-1.5 pr-[3px]">
          <CloseButton label="關閉終端" />
        </div>
        <div className="flex-1 bg-linear-to-b from-[#bad0ea] to-[#a6c0da]" />
      </div>
      <div className="mt-[9px] ml-0.5 min-w-0 flex-1 overflow-hidden border-t border-l border-[#a0a0a0] bg-white">
        <table className="w-full table-fixed border-collapse text-[23px] leading-none whitespace-nowrap">
          <thead>
            <tr className="h-10 border-b border-[#c0c0c0]">
              <th className="pl-1.5 text-left text-[24px] font-light">標題</th>
            </tr>
          </thead>
          <tbody>
            {news.map((n) => (
              <tr key={n} className="h-[39px] border-b border-[#c0c0c0] odd:bg-[#ebebeb]">
                <td className="pl-2">
                  <span className="flex items-center gap-2">
                    <NewsIcon />
                    <a href="#news">{n}</a>
                  </span>
                </td>
              </tr>
            ))}
          </tbody>
        </table>
      </div>
    </section>
  );
}

/* ---------- window ---------- */

export default function App() {
  return (
    <div className="relative min-h-screen overflow-hidden bg-[#f0f0f0] font-['Noto_Sans','Noto_Sans_CJK_TC',sans-serif] text-black">
      <Defs />
      <header className="flex h-[45px] items-center bg-white pt-px text-[23px] whitespace-nowrap">
        <span className="relative z-10 mt-1 grid h-[34px] w-[150px] grid-cols-6 grid-rows-2 overflow-hidden rounded-r-full rounded-l-full">
          <span className="row-span-2 bg-[#dde4b2]" />
          <span className="row-span-2 bg-[#e0e5c6]" />
          <span className="bg-[#dcdcdc]" />
          <span className="bg-[#e9e9e9]" />
          <span className="bg-[#dcdcdc]" />
          <span className="row-span-2 bg-[#efefef]" />
          <span className="bg-[#e9e9e9]" />
          <span className="bg-[#dddddd]" />
          <span className="bg-[#e2e2e2]" />
        </span>
        <h1 className="-ml-2.5">ThinkForexAU-Live - [USDJPY,Daily]</h1>
      </header>
      <nav aria-label="主選單" className="flex h-[41px] items-center border-b border-[#a0a0a0] pl-0.5 text-[23px] whitespace-nowrap">
        <AppLogo />
        <div className="flex gap-9 pl-4">
          {menus.map(([name, key]) => (
            <button key={key} type="button">
              <span className="font-light">{name}</span>(<span className="underline underline-offset-2">{key}</span>)
            </button>
          ))}
        </div>
      </nav>
      <MainToolbar />
      <LineToolbar />
      <main className="flex border-t border-[#a0a0a0]">
        <div className="w-[737px] shrink-0">
          <MarketWatch />
          <Navigator />
        </div>
        <ChartPane />
      </main>
      <NewsPanel />
    </div>
  );
}
